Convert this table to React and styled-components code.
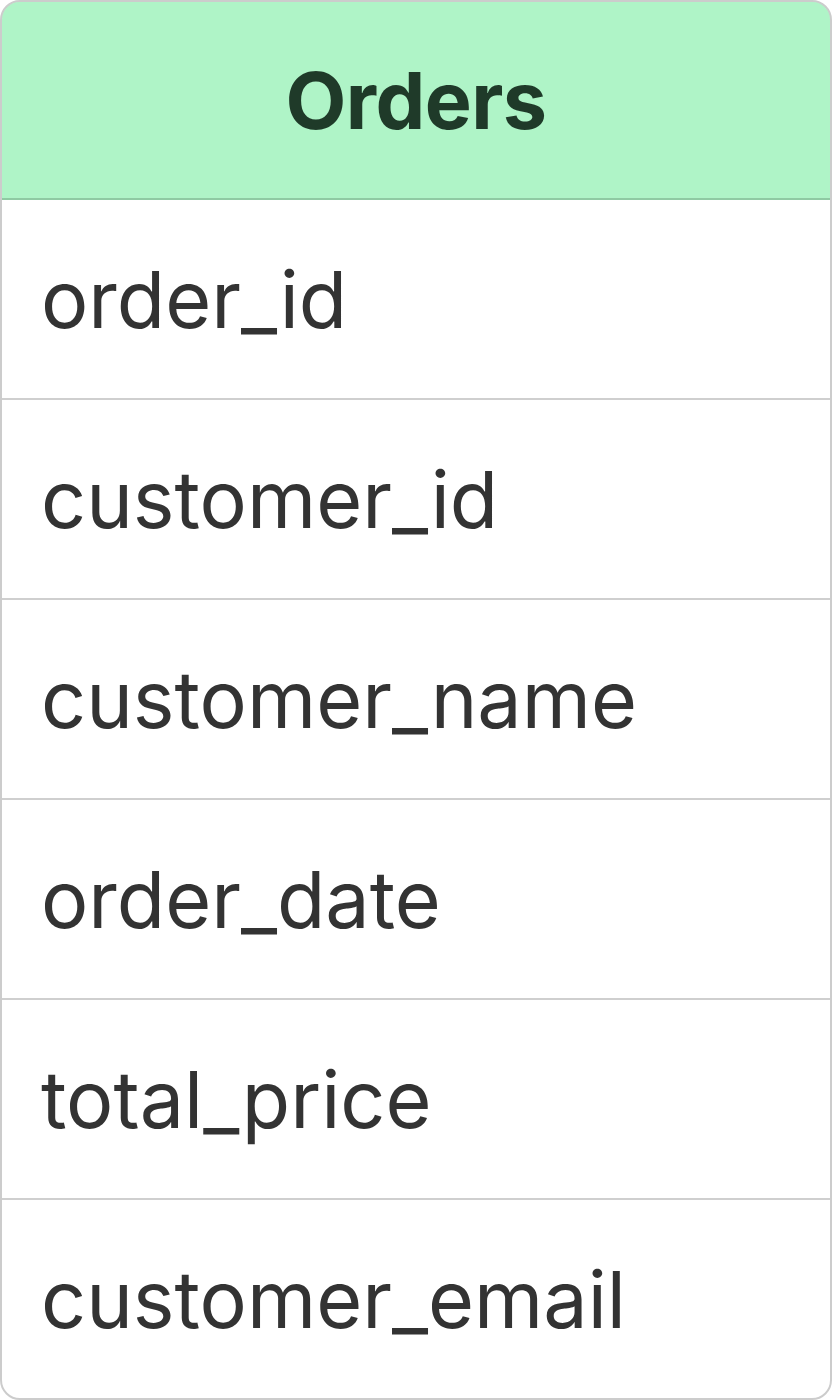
import React from "react";
import styled, { createGlobalStyle } from "styled-components";

const GlobalStyle = createGlobalStyle`
    html, body {
        margin : 0;
        padding : 0;
        background : #ffffff;
    }
    body {
        font-family : Inter, "Noto Sans", sans-serif;
    }
`;

const columns = [
    "order_id",
    "customer_id",
    "customer_name",
    "order_date",
    "total_price",
    "customer_email",
];

const App = () => (
    <>
        <GlobalStyle/>
        <TableCard>
            <TableHeader>Orders</TableHeader>
            {columns.map((name, i) => (
                <ColumnRow key={name} last={i === columns.length - 1}>
                    {name}
                </ColumnRow>
            ))}
        </TableCard>
    </>
);

const TableCard = styled.div`
    width : 832px;
    height : 1400px;
    box-sizing : border-box;
    border : 2px solid #cccccc;
    border-radius : 20px;
    overflow : hidden;
    background : #ffffff;
    display : flex;
    flex-direction : column;
`;

const TableHeader = styled.div`
    height : 200px;
    flex-shrink : 0;
    box-sizing : border-box;
    margin : -2px -2px 0;
    border : 2px solid #8fcaa3;
    border-radius : 20px 20px 0 0;
    background : #aff4c7;
    display : flex;
    align-items : center;
    justify-content : center;
    font-size : 79px;
    font-weight : 700;
    color : #1f3a29;
    letter-spacing : -0.6px;
`;

const ColumnRow = styled.div`
    height : 200px;
    flex-shrink : 0;
    box-sizing : border-box;
    border-bottom : ${props => props.last ? "none" : "2px solid #cfcfcf"};
    display : flex;
    align-items : center;
    padding : 0 39px;
    font-size : 79px;
    color : #333333;
    ${props => props.last && "flex : 1;"}
`;

export default App;
